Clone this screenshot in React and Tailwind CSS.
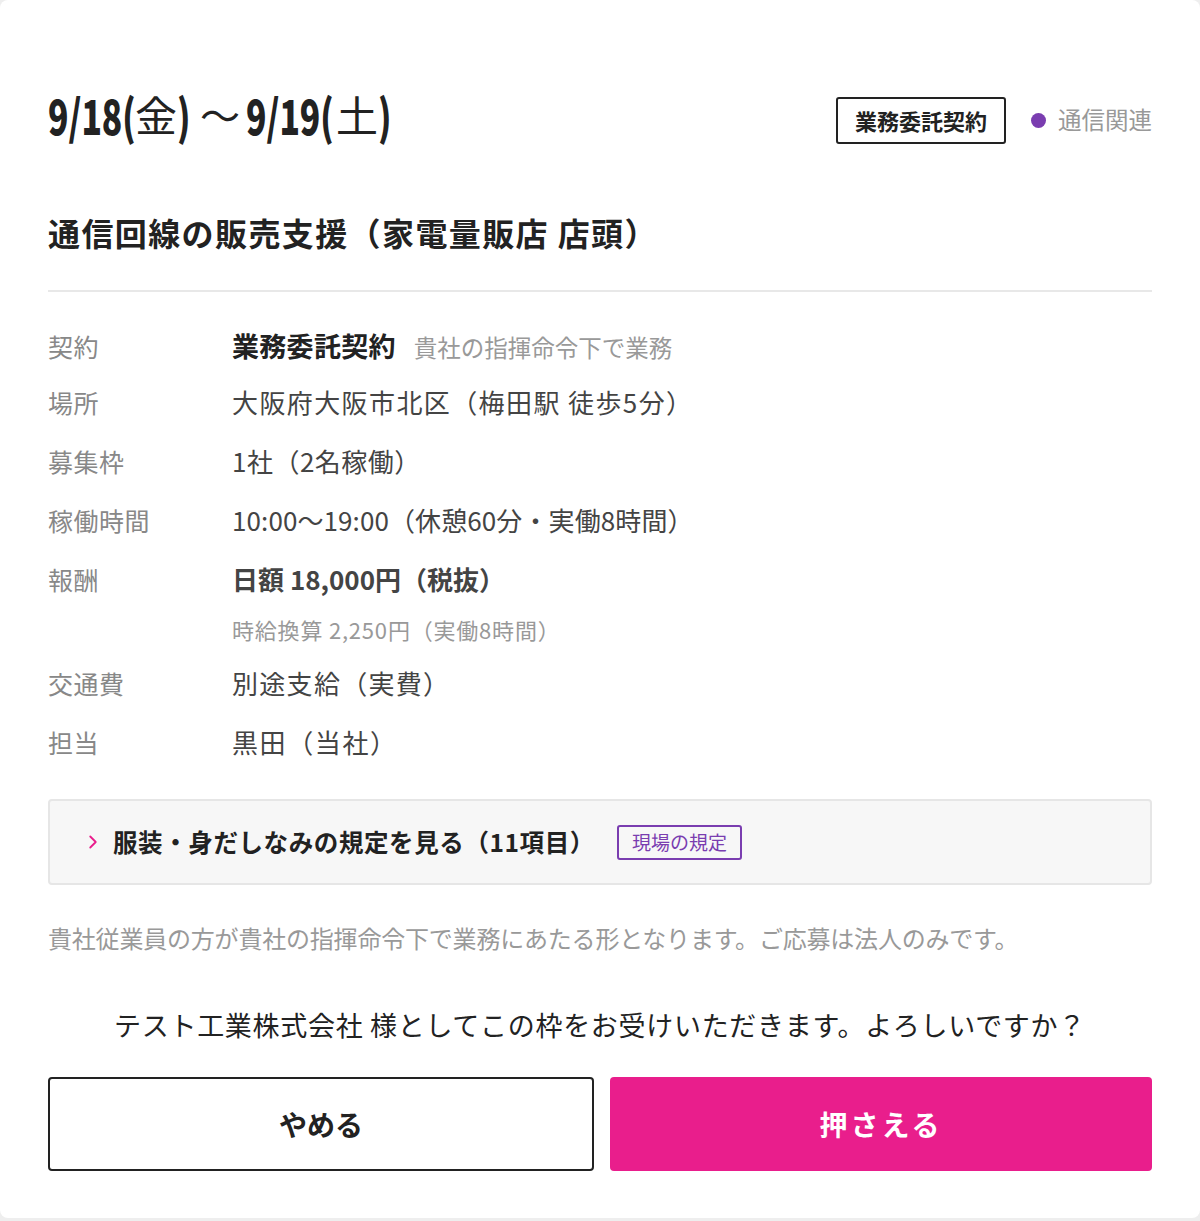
import React from 'react';
import { ChevronRight } from 'lucide-react';

const jp = { fontFamily: '"Noto Sans CJK JP", "Noto Sans", sans-serif' };

// condensed digits: the page has no condensed face, so squeeze the glyphs
const Narrow = ({ w, children }) => (
  <span className={`inline-block overflow-visible whitespace-nowrap ${w}`}>
    <span className="inline-block origin-left scale-x-[0.7] font-black">{children}</span>
  </span>
);

const rows = [
  { label: '契約', first: true, value: <><span className="font-bold text-[#222] text-[27px] tracking-[0.3px]">業務委託契約</span><span className="ml-[18px] text-[23.5px] text-[#999]">貴社の指揮命令下で業務</span></> },
  { label: '場所', value: '大阪府大阪市北区（梅田駅 徒歩5分）', track: 'tracking-[1.4px]' },
  { label: '募集枠', value: '1社（2名稼働）', track: 'tracking-[0.5px]' },
  { label: '稼働時間', value: '10:00～19:00（休憩60分・実働8時間）', track: 'tracking-[0.1px]' },
  {
    label: '報酬',
    value: <span className="font-bold text-[#444]">日額 18,000円（税抜）</span>,
    sub: '時給換算 2,250円（実働8時間）',
  },
  { label: '交通費', value: '別途支給（実費）', track: 'tracking-[1.3px]' },
  { label: '担当', value: '黒田（当社）', track: 'tracking-[1.6px]' },
];

const App = () => {
  return (
    <div className="min-h-screen bg-[#eeeeee]" style={jp}>
      <div className="bg-white rounded-lg px-12 pt-[90px] pb-[47px]">
        {/* Header */}
        <div className="flex items-center justify-between h-[60px]">
          <h1 className="mb-[12px] flex items-center text-[48px] text-[#222] leading-none whitespace-nowrap">
            <Narrow w="w-[87px]">9/18(</Narrow>
            <span className="font-normal text-[42px]">金</span>
            <Narrow w="w-[15px]">)</Narrow>
            <span className="font-normal text-[40px] ml-[8px] mr-[6px]">～</span>
            <Narrow w="w-[90px]">9/19(</Narrow>
            <span className="font-normal text-[42px]">土</span>
            <Narrow w="w-[15px]">)</Narrow>
          </h1>
          <div className="flex items-center">
            <span className="border-2 border-[#222] rounded-[3px] px-[17px] h-[47px] flex items-center text-[22px] font-bold text-[#222]">業務委託契約</span>
            <span className="ml-[25px] w-[15px] h-[15px] rounded-full bg-[#7a3db0]"></span>
            <span className="ml-[12px] text-[23.5px] text-[#999]">通信関連</span>
          </div>
        </div>

        {/* Title */}
        <h2 className="mt-[59px] text-[32px] font-bold text-[#222] leading-[46px] pb-[35px] border-b-2 border-[#e8e8e8] tracking-[1.4px]">
          通信回線の販売支援（家電量販店 店頭）
        </h2>

        {/* Details */}
        <div className="mt-[36px] flex flex-col gap-[23px]">
          {rows.map((r) => (
            <div key={r.label} className={`flex ${r.first ? 'h-[33px]' : ''}`}>
              <div className="w-[184px] shrink-0 text-[25px] leading-[36px] text-[#888] tracking-[0.5px]">{r.label}</div>
              <div>
                <div className={`text-[26px] leading-[36px] text-[#444] ${r.track || ''}`}>{r.value}</div>
                {r.sub && <div className="mt-[19px] text-[22px] leading-[26px] text-[#999] tracking-[0.8px]">{r.sub}</div>}
              </div>
            </div>
          ))}
        </div>

        {/* Accordion */}
        <div className="mt-[39px] h-[86px] bg-[#f7f7f7] border-2 border-[#e6e6e6] rounded-[4px] flex items-center pl-[32px]">
          <ChevronRight size={22} strokeWidth={2} className="text-[#e91e8c]" />
          <span className="ml-[9px] text-[24.5px] font-bold text-[#222] tracking-[0.6px]">服装・身だしなみの規定を見る（11項目）</span>
          <span className="ml-[22px] border-2 border-[#7a3db0] rounded-[3px] h-[35px] px-[13px] flex items-center text-[19px] text-[#7a3db0]">現場の規定</span>
        </div>

        {/* Note */}
        <p className="mt-[35px] text-[24px] leading-[36px] text-[#999] tracking-[-0.2px]">
          貴社従業員の方が貴社の指揮命令下で業務にあたる形となります。ご応募は法人のみです。
        </p>

        <p className="mt-[49px] text-center text-[27px] leading-[40px] text-[#222] tracking-[0.7px]">
          テスト工業株式会社 様としてこの枠をお受けいただきます。よろしいですか？
        </p>

        {/* Buttons */}
        <div className="mt-[32px] flex gap-4">
          <button className="flex-1 h-[94px] border-2 border-[#222] rounded-[4px] bg-white text-[28px] font-bold text-[#222]">やめる</button>
          <button className="flex-1 h-[94px] rounded-[4px] bg-[#e91e8c] text-[28px] font-bold text-white tracking-[3px]">押さえる</button>
        </div>
      </div>
    </div>
  );
};

export default App;
